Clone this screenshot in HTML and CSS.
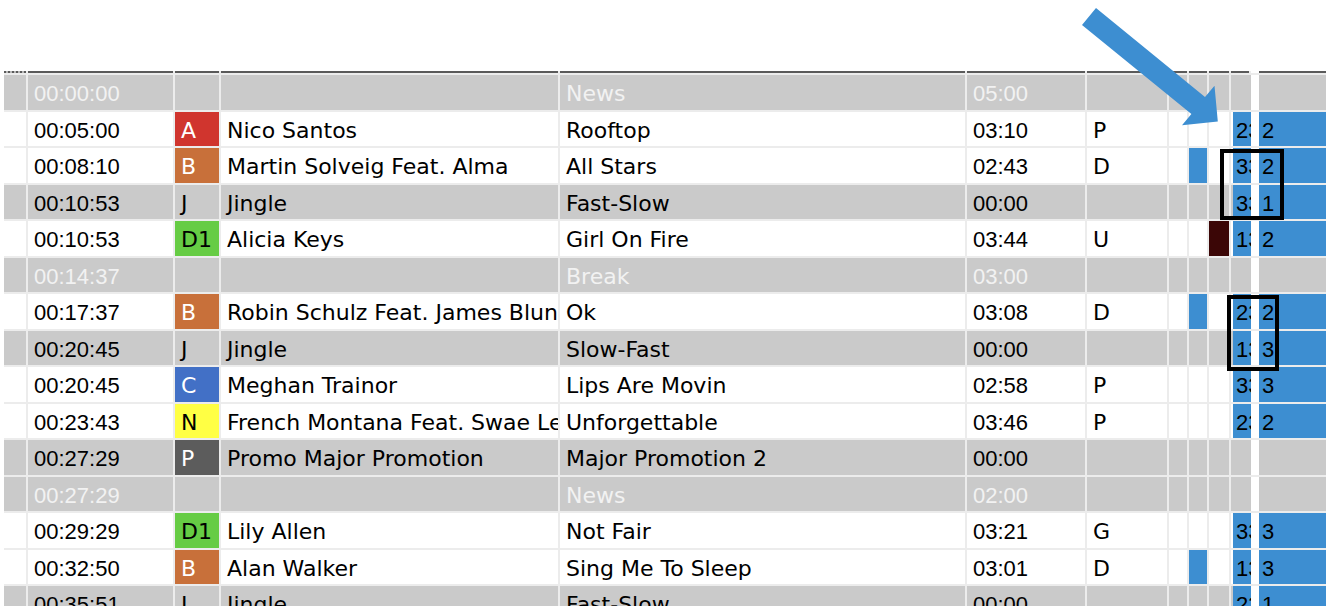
FILE: index.html
```html
<!DOCTYPE html>
<html lang="en">
<head>
    <meta charset="UTF-8">
    <title>Playlist</title>
    <link rel="stylesheet" href="styles.css">
</head>
<body>
<div class="sheet">
    <div class="row head">
        <div class="c dots"></div><div class="c"></div><div class="c"></div><div class="c"></div><div class="c"></div><div class="c"></div><div class="c"></div><div class="c"></div><div class="c"></div><div class="c"></div><div class="c"></div><div class="c stripe"></div><div class="c last"></div>
    </div>

    <div class="row g brk">
        <div class="c"></div><div class="c t">00:00:00</div><div class="c"></div><div class="c"></div><div class="c">News</div><div class="c t">05:00</div><div class="c"></div><div class="c"></div><div class="c"></div><div class="c"></div><div class="c nb"></div><div class="c stripe"></div><div class="c last"></div>
    </div>
    <div class="row">
        <div class="c"></div><div class="c t">00:05:00</div><div class="c b-a">A</div><div class="c">Nico Santos</div><div class="c">Rooftop</div><div class="c t">03:10</div><div class="c">P</div><div class="c"></div><div class="c"></div><div class="c"></div><div class="c nb"><span class="bar">23</span></div><div class="c stripe"></div><div class="c last"><span class="bar">2</span></div>
    </div>
    <div class="row">
        <div class="c"></div><div class="c t">00:08:10</div><div class="c b-b">B</div><div class="c">Martin Solveig Feat. Alma</div><div class="c">All Stars</div><div class="c t">02:43</div><div class="c">D</div><div class="c"></div><div class="c mk"></div><div class="c"></div><div class="c nb"><span class="bar">33</span></div><div class="c stripe"></div><div class="c last"><span class="bar">2</span></div>
    </div>
    <div class="row g">
        <div class="c"></div><div class="c t">00:10:53</div><div class="c">J</div><div class="c">Jingle</div><div class="c">Fast-Slow</div><div class="c t">00:00</div><div class="c"></div><div class="c"></div><div class="c"></div><div class="c"></div><div class="c nb"><span class="bar">33</span></div><div class="c stripe"></div><div class="c last"><span class="bar">1</span></div>
    </div>
    <div class="row">
        <div class="c"></div><div class="c t">00:10:53</div><div class="c b-d">D1</div><div class="c">Alicia Keys</div><div class="c">Girl On Fire</div><div class="c t">03:44</div><div class="c">U</div><div class="c"></div><div class="c"></div><div class="c mr"></div><div class="c nb"><span class="bar">13</span></div><div class="c stripe"></div><div class="c last"><span class="bar">2</span></div>
    </div>
    <div class="row g brk">
        <div class="c"></div><div class="c t">00:14:37</div><div class="c"></div><div class="c"></div><div class="c">Break</div><div class="c t">03:00</div><div class="c"></div><div class="c"></div><div class="c"></div><div class="c"></div><div class="c nb"></div><div class="c stripe"></div><div class="c last"></div>
    </div>
    <div class="row">
        <div class="c"></div><div class="c t">00:17:37</div><div class="c b-b">B</div><div class="c">Robin Schulz Feat. James Blunt</div><div class="c">Ok</div><div class="c t">03:08</div><div class="c">D</div><div class="c"></div><div class="c mk"></div><div class="c"></div><div class="c nb"><span class="bar">23</span></div><div class="c stripe"></div><div class="c last"><span class="bar">2</span></div>
    </div>
    <div class="row g">
        <div class="c"></div><div class="c t">00:20:45</div><div class="c">J</div><div class="c">Jingle</div><div class="c">Slow-Fast</div><div class="c t">00:00</div><div class="c"></div><div class="c"></div><div class="c"></div><div class="c"></div><div class="c nb"><span class="bar">13</span></div><div class="c stripe"></div><div class="c last"><span class="bar">3</span></div>
    </div>
    <div class="row">
        <div class="c"></div><div class="c t">00:20:45</div><div class="c b-c">C</div><div class="c">Meghan Trainor</div><div class="c">Lips Are Movin</div><div class="c t">02:58</div><div class="c">P</div><div class="c"></div><div class="c"></div><div class="c"></div><div class="c nb"><span class="bar">33</span></div><div class="c stripe"></div><div class="c last"><span class="bar">3</span></div>
    </div>
    <div class="row">
        <div class="c"></div><div class="c t">00:23:43</div><div class="c b-n">N</div><div class="c">French Montana Feat. Swae Lee</div><div class="c">Unforgettable</div><div class="c t">03:46</div><div class="c">P</div><div class="c"></div><div class="c"></div><div class="c"></div><div class="c nb"><span class="bar">23</span></div><div class="c stripe"></div><div class="c last"><span class="bar">2</span></div>
    </div>
    <div class="row g">
        <div class="c"></div><div class="c t">00:27:29</div><div class="c b-p">P</div><div class="c">Promo Major Promotion</div><div class="c">Major Promotion 2</div><div class="c t">00:00</div><div class="c"></div><div class="c"></div><div class="c"></div><div class="c"></div><div class="c nb"></div><div class="c stripe"></div><div class="c last"></div>
    </div>
    <div class="row g brk">
        <div class="c"></div><div class="c t">00:27:29</div><div class="c"></div><div class="c"></div><div class="c">News</div><div class="c t">02:00</div><div class="c"></div><div class="c"></div><div class="c"></div><div class="c"></div><div class="c nb"></div><div class="c stripe"></div><div class="c last"></div>
    </div>
    <div class="row">
        <div class="c"></div><div class="c t">00:29:29</div><div class="c b-d">D1</div><div class="c">Lily Allen</div><div class="c">Not Fair</div><div class="c t">03:21</div><div class="c">G</div><div class="c"></div><div class="c"></div><div class="c"></div><div class="c nb"><span class="bar">33</span></div><div class="c stripe"></div><div class="c last"><span class="bar">3</span></div>
    </div>
    <div class="row">
        <div class="c"></div><div class="c t">00:32:50</div><div class="c b-b">B</div><div class="c">Alan Walker</div><div class="c">Sing Me To Sleep</div><div class="c t">03:01</div><div class="c">D</div><div class="c"></div><div class="c mk"></div><div class="c"></div><div class="c nb"><span class="bar">13</span></div><div class="c stripe"></div><div class="c last"><span class="bar">3</span></div>
    </div>
    <div class="row g">
        <div class="c"></div><div class="c t">00:35:51</div><div class="c">J</div><div class="c">Jingle</div><div class="c">Fast-Slow</div><div class="c t">00:00</div><div class="c"></div><div class="c"></div><div class="c"></div><div class="c"></div><div class="c nb"><span class="bar">23</span></div><div class="c stripe"></div><div class="c last"><span class="bar">1</span></div>
    </div>
</div>

<svg class="arrow" width="1326" height="606" viewBox="0 0 1326 606">
    <polygon points="1096,8 1205,97 1214.5,85.7 1217.8,121.6 1182,125.3 1191.4,114 1082,25" fill="#3d8ed1"/>
</svg>
<div class="mark mark-a"></div>
<div class="mark mark-b"></div>
</body>
</html>
```

FILE: styles.css
```css
body { margin: 0; background: #fff; font-family: "DejaVu Sans", sans-serif; font-size: 22px; color: #000; overflow: hidden; height: 606px; position: relative; }
.sheet { margin: 71px 0 0 4px; }
.row { display: grid; grid-template-columns: 24px 147px 46px 339px 407px 120px 82px 20px 20px 22px 20px 8px 1fr; height: 34.5px; line-height: 38px; border-bottom: 2px solid #ececec; }
.c { box-sizing: border-box; border-right: 2px solid #ececec; padding-left: 6px; overflow: hidden; white-space: nowrap; background: #fff; }
.row.g .c { background: #cacaca; }
.row.brk .c { color: #f2f2f2; }
.t { font-family: "Liberation Sans", sans-serif; }

.row.head { height: 2px; line-height: 2px; }
.row.head .c { background: #5a5a5a; }
.row.head .c.dots { background: repeating-linear-gradient(90deg, #5a5a5a 0 2px, #b8b8b8 2px 4px); }

.b-a { background: #d0352e !important; color: #fff; }
.b-b { background: #c8703a !important; color: #fff; }
.b-c { background: #4270c6 !important; color: #fff; }
.b-d { background: #66cc44 !important; }
.b-n { background: #ffff44 !important; }
.b-p { background: #5c5c5c !important; color: #fff; }
.mk { background: #3d8ed1 !important; }
.mr { background: #3b0606 !important; }

.c.nb { border-right: none; padding-left: 2px; }
.c.stripe { border-right: none; padding: 0; background: #fff !important; }
.c.last { border-right: none; padding: 0; }
.bar { display: block; height: 100%; background: #3d8ed1; padding-left: 3px; font-family: "Liberation Sans", sans-serif; overflow: hidden; }

.arrow { position: absolute; left: 0; top: 0; pointer-events: none; }
.mark { position: absolute; border: 4px solid #000; box-sizing: border-box; }
.mark-a { left: 1220px; top: 149px; width: 64px; height: 71px; }
.mark-b { left: 1227px; top: 295px; width: 52px; height: 76px; }
```
